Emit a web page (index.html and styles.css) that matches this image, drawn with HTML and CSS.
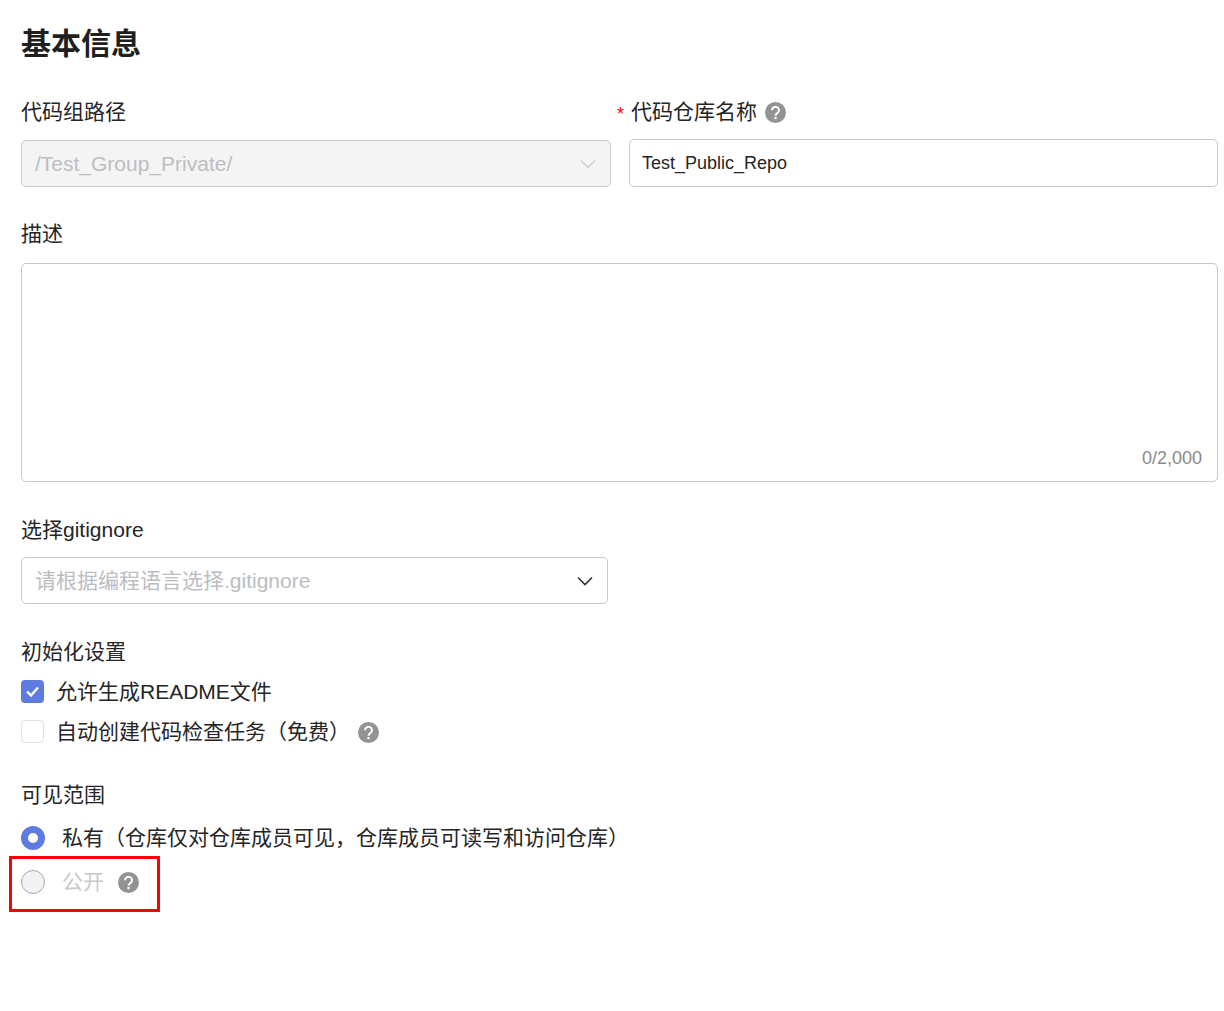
FILE: index.html
```html
<!DOCTYPE html>
<html lang="zh-CN">
  <head>
    <meta charset="utf-8">
    <title>基本信息</title>
    <link rel="stylesheet" href="styles.css">
  </head>
  <body>
    <svg class="defs" width="0" height="0">
      <symbol id="help" viewBox="0 0 21 21">
        <circle cx="10.5" cy="10.5" r="10.5" fill="#939393"/>
        <path d="M7 8.2a3.5 3.3 0 1 1 5.6 2.6c-1.3 1-2.1 1.4-2.1 3" fill="none" stroke="#fff" stroke-width="2"/>
        <rect x="9.4" y="15" width="2.2" height="2.2" fill="#fff"/>
      </symbol>
    </svg>
    <div class="page">
      <h1 class="title">基本信息</h1>

      <div class="row">
        <div class="field">
          <div class="label">代码组路径</div>
          <div class="control select disabled">
            <span>/Test_Group_Private/</span>
            <svg class="arrow" width="16" height="10" viewBox="0 0 16 10"><path d="M1 1.5l7 7 7-7" fill="none" stroke="#cfcfcf" stroke-width="1.4"/></svg>
          </div>
        </div>
        <div class="field">
          <div class="label label-req">
            <span class="star">*</span>
            <span>代码仓库名称</span>
            <svg class="help" width="21" height="21"><use href="#help"/></svg>
          </div>
          <div class="control repo-name">Test_Public_Repo</div>
        </div>
      </div>

      <div class="label">描述</div>
      <div class="textarea">
        <span class="counter">0/2,000</span>
      </div>

      <div class="label label-git">选择gitignore</div>
      <div class="control select git-select">
        <span class="placeholder">请根据编程语言选择.gitignore</span>
        <svg class="arrow" width="16" height="10" viewBox="0 0 16 10"><path d="M1 1.5l7 7 7-7" fill="none" stroke="#333" stroke-width="1.6"/></svg>
      </div>

      <div class="label label-init">初始化设置</div>
      <div class="check-row">
        <span class="checkbox checked">
          <svg width="23" height="23" viewBox="0 0 23 23"><path d="M6 11.5l4 4 7-8" fill="none" stroke="#fff" stroke-width="2.4"/></svg>
        </span>
        <span>允许生成README文件</span>
      </div>
      <div class="check-row">
        <span class="checkbox"></span>
        <span>自动创建代码检查任务（免费）</span>
        <svg class="help" width="21" height="21"><use href="#help"/></svg>
      </div>

      <div class="label label-scope">可见范围</div>
      <div class="radio-row">
        <span class="radio on"></span>
        <span>私有（仓库仅对仓库成员可见，仓库成员可读写和访问仓库）</span>
      </div>
      <div class="radio-row off">
        <span class="radio"></span>
        <span class="off-text">公开</span>
        <svg class="help" width="21" height="21"><use href="#help"/></svg>
        <div class="mark"></div>
      </div>
    </div>
  </body>
</html>
```

FILE: styles.css
```css
*{
    margin: 0;
    padding: 0;
    box-sizing: border-box;
}
body{
    background: #fff;
    color: #252525;
    font-family: "Liberation Sans", "Noto Sans CJK SC", sans-serif;
    font-size: 21px;
    line-height: 30px;
}
.defs{
    position: absolute;
}
.page{
    min-height: 1011px;
    padding: 22px 6px 0 21px;
}
.title{
    height: 42px;
    line-height: 43px;
    font-size: 30px;
    font-weight: 700;
    color: #1f1f1f;
    margin-bottom: 33px;
}
.row{
    display: grid;
    grid-template-columns: 590px 589px;
    gap: 18px;
    margin-bottom: 32px;
}
.field{
    display: flex;
    flex-direction: column;
    justify-content: space-between;
    height: 90px;
}
.label{
    height: 30px;
    display: flex;
    align-items: center;
}
.label-req{
    gap: 9px;
    margin-left: -12px;
}
.label-req .help{
    margin-left: -1px;
}
.star{
    color: #f00;
    font-size: 18px;
    width: 6px;
    margin-top: 3px;
    margin-right: -1px;
}
.control{
    height: 48px;
    border: 1px solid #c8c8c8;
    border-radius: 5px;
    display: flex;
    align-items: center;
    padding: 0 12px;
}
.repo-name{
    font-size: 18px;
}
.select{
    justify-content: space-between;
    padding: 0 14px 0 13px;
}
.disabled{
    height: 47px;
    background: #f4f4f5;
    color: #bcbdc2;
}
.textarea{
    height: 219px;
    margin: 14px 0 33px;
    border: 1px solid #c8c8c8;
    border-radius: 5px;
    display: flex;
    justify-content: flex-end;
    align-items: flex-end;
    padding: 0 15px 12px 0;
}
.counter{
    font-size: 18px;
    line-height: 21px;
    color: #8a8a8a;
}
.label-git{
    margin-bottom: 12px;
}
.git-select{
    width: 587px;
    height: 47px;
    margin-bottom: 33px;
}
.placeholder{
    color: #bcbdc2;
}
.label-init{
    margin-bottom: 5px;
}
.check-row{
    height: 40px;
    display: flex;
    align-items: center;
    gap: 12px;
}
.check-row .help{
    margin-left: -4px;
}
.checkbox{
    width: 23px;
    height: 23px;
    margin-top: -1px;
    border: 1px solid #dfe1e6;
    border-radius: 4px;
    background: #fff;
}
.checkbox.checked{
    border: none;
    background: #5e7ce0;
}
.checkbox svg{
    display: block;
}
.label-scope{
    margin: 28px 0 6px;
}
.radio-row{
    position: relative;
    height: 44px;
    display: flex;
    align-items: center;
    gap: 17px;
}
.radio{
    width: 24px;
    height: 24px;
    border-radius: 50%;
    border: 1px solid #a8a8a8;
    background: #f3f3f3;
}
.radio.on{
    border: 7px solid #5e7ce0;
    background: #fff;
}
.off{
    gap: 0;
}
.off-text{
    margin-left: 17px;
    margin-right: 14px;
    color: #c9c9c9;
}
.mark{
    position: absolute;
    left: -12px;
    top: -4px;
    width: 151px;
    height: 56px;
    border: 3px solid #f00;
}
```
